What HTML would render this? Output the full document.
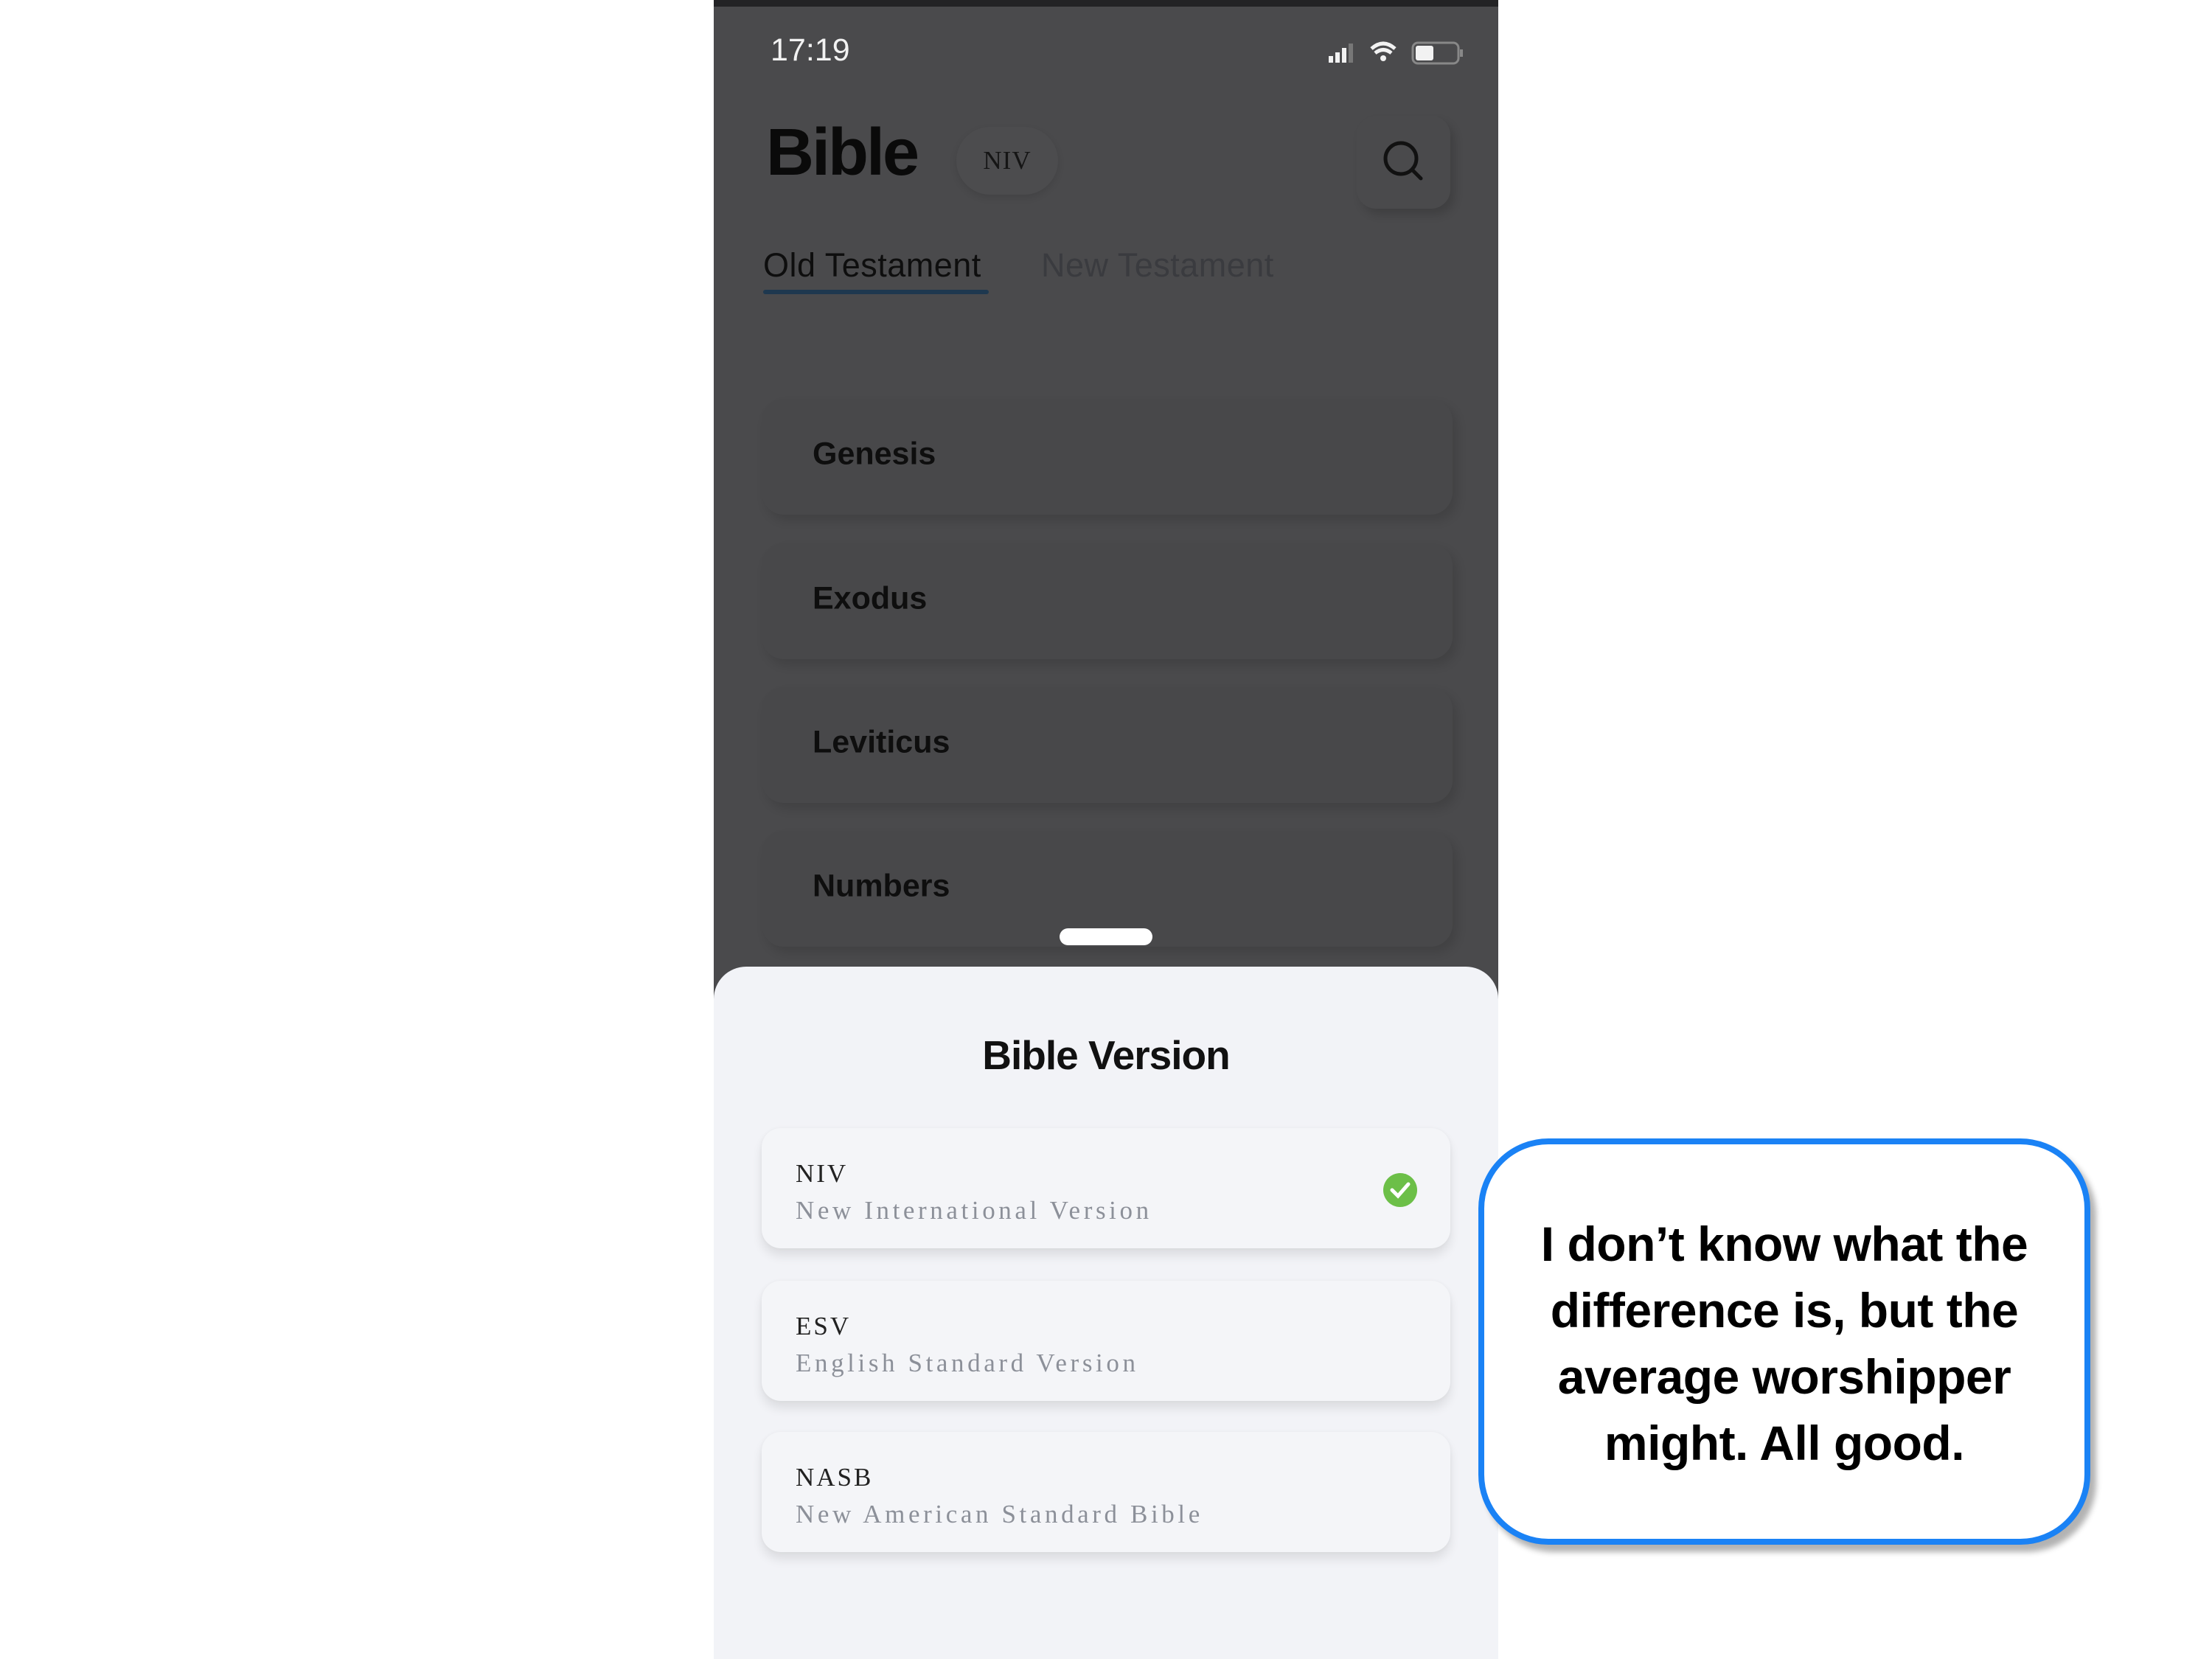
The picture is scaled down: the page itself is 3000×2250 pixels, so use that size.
<!DOCTYPE html>
<html><head><meta charset="utf-8"><style>
*{margin:0;padding:0;box-sizing:border-box}
body{width:3000px;height:2250px;background:#fff;position:relative;overflow:hidden;font-family:"Liberation Sans",sans-serif}
.phone{position:absolute;left:968px;top:0;width:1064px;height:2250px;background:#4a4a4c;overflow:hidden}
.topband{position:absolute;left:0;top:0;width:100%;height:9px;background:#232325}
.abs{position:absolute}
.card{position:absolute;left:65px;width:937px;height:157px;background:#48484a;border-radius:30px;box-shadow:6px 8px 14px rgba(0,0,0,0.12)}
.card span{position:absolute;left:69px;top:50%;transform:translateY(-58%);font-size:43px;font-weight:bold;color:#0e0e0e}
.sheet{position:absolute;left:0;top:1311px;width:1064px;height:1000px;background:#f2f3f7;border-radius:44px 44px 0 0}
.opt{position:absolute;left:65px;width:934px;height:163px;background:#f4f5f8;border-radius:26px;box-shadow:0 10px 14px rgba(0,0,0,0.09),0 0 6px rgba(0,0,0,0.04)}
.opt .t{position:absolute;left:46px;top:42px;font-family:"Liberation Serif",serif;font-size:35px;letter-spacing:3px;color:#222}
.opt .s{position:absolute;left:46px;top:92px;font-family:"Liberation Serif",serif;font-size:35px;letter-spacing:4.6px;color:#8c9099}
</style></head><body>
<div class="phone">
<div class="topband"></div>
<div class="abs" style="left:77px;top:44px;font-size:43px;color:#f2f2f2">17:19</div>
<svg class="abs" style="left:832px;top:52px" width="196" height="40" viewBox="0 0 196 40">
<rect x="2" y="24" width="6" height="9" fill="#f2f2f2"/><rect x="11" y="19" width="6" height="14" fill="#f2f2f2"/><rect x="20" y="13" width="6" height="20" fill="#f2f2f2"/><rect x="29" y="7" width="6" height="26" fill="#777"/>
<path d="M60 14 Q76 0 92 14" stroke="#f2f2f2" stroke-width="5" fill="none"/><path d="M65 20 Q76 11 87 20" stroke="#f2f2f2" stroke-width="5" fill="none"/><circle cx="76" cy="27" r="4" fill="#f2f2f2"/>
<rect x="116" y="6" width="62" height="28" rx="7" fill="none" stroke="#888" stroke-width="3"/><rect x="120" y="10" width="24" height="20" rx="3" fill="#f2f2f2"/><rect x="180" y="15" width="4" height="10" fill="#888"/>
</svg>
<div class="abs" style="left:71px;top:156px;font-size:90px;font-weight:bold;color:#0a0a0a;letter-spacing:-3px">Bible</div>
<div class="abs" style="left:329px;top:172px;width:138px;height:92px;border-radius:46px;background:#4c4c4e;box-shadow:0 4px 10px rgba(0,0,0,0.1);font-family:'Liberation Serif',serif;font-size:35px;color:#151515;text-align:center;line-height:92px;letter-spacing:1px">NIV</div>
<div class="abs" style="left:872px;top:157px;width:127px;height:126px;border-radius:26px;background:#4a4a4c;box-shadow:6px 8px 12px rgba(0,0,0,0.15)"></div>
<svg class="abs" style="left:903px;top:186px" width="66" height="66" viewBox="0 0 66 66"><circle cx="29" cy="29" r="21" stroke="#111" stroke-width="5" fill="none"/><path d="M44 44 L56 56" stroke="#111" stroke-width="5" stroke-linecap="round"/></svg>
<div class="abs" style="left:67px;top:334px;font-size:45px;color:#0e0e0e;letter-spacing:0.5px">Old Testament</div>
<div class="abs" style="left:67px;top:393px;width:306px;height:6px;background:#1e384f;border-radius:3px"></div>
<div class="abs" style="left:444px;top:334px;font-size:45px;color:#3a3b3f;letter-spacing:0.5px">New Testament</div>
<div class="card" style="top:541px"><span>Genesis</span></div>
<div class="card" style="top:737px"><span>Exodus</span></div>
<div class="card" style="top:932px"><span>Leviticus</span></div>
<div class="card" style="top:1127px"><span>Numbers</span></div>
<div class="abs" style="left:469px;top:1259px;width:126px;height:23px;border-radius:12px;background:#fff"></div>
<div class="sheet">
<div class="abs" style="left:0;width:1064px;top:88px;text-align:center;font-size:55px;font-weight:bold;color:#111;letter-spacing:-1px">Bible Version</div>
<div class="opt" style="top:219px"><div class="t">NIV</div><div class="s">New International Version</div>
<svg class="abs" style="left:841px;top:59px" width="50" height="50" viewBox="0 0 50 50"><circle cx="25" cy="25" r="23" fill="#6cbf48"/><path d="M14 25 L22 33 L36 17" stroke="#fff" stroke-width="5" fill="none" stroke-linecap="round"/></svg></div>
<div class="opt" style="top:426px"><div class="t">ESV</div><div class="s">English Standard Version</div></div>
<div class="opt" style="top:631px"><div class="t">NASB</div><div class="s">New American Standard Bible</div></div>
</div>
</div>
<div class="abs" style="left:2005px;top:1544px;width:830px;height:551px;border:8px solid #1a82f5;border-radius:95px;background:#fff;box-shadow:8px 10px 8px rgba(0,0,0,0.3)"></div>
<div class="abs" style="left:2005px;top:1642px;width:830px;text-align:center;font-size:66px;font-weight:bold;line-height:90px;color:#000;letter-spacing:-0.5px">I don’t know what the<br>difference is, but the<br>average worshipper<br>might. All good.</div>
</body></html>
